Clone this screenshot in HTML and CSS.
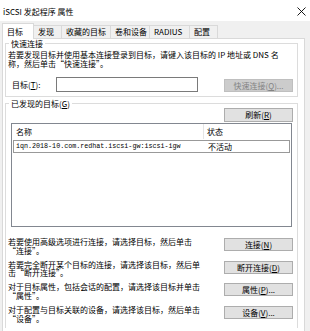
FILE: index.html
```html
<!DOCTYPE html>
<html lang="zh-CN">
<head>
    <meta charset="UTF-8">
    <meta name="viewport" content="width=device-width, initial-scale=1.0">
    <title>iSCSI 发起程序 属性</title>
    <link rel="stylesheet" href="styles.css">
</head>
<body>
    <div class="titlebar">
        <span class="title">iSCSI 发起程序 属性</span>
        <svg class="close" width="9" height="9" viewBox="0 0 9 9">
            <path d="M0.5 0.5 L8.5 8.5 M8.5 0.5 L0.5 8.5" stroke="#000" stroke-width="0.9" fill="none"/>
        </svg>
    </div>

    <div class="tabs">
        <div class="tab tab-active w31">目标</div>
        <div class="tab w28">发现</div>
        <div class="tab w49">收藏的目标</div>
        <div class="tab w39">卷和设备</div>
        <div class="tab w40">RADIUS</div>
        <div class="tab w28">配置</div>
    </div>

    <div class="panel">
        <fieldset class="group group-quick">
            <legend>快速连接</legend>
            <div class="desc">若要发现目标并使用基本连接登录到目标，请键入该目标的 IP 地址或 DNS 名称，然后单击“快速连接”。</div>
            <div class="quick-row">
                <label class="field-label" for="target">目标(<u>T</u>):</label>
                <input type="text" id="target" class="field">
                <button class="btn btn-disabled" disabled>快速连接(<u>Q</u>)...</button>
            </div>
        </fieldset>

        <fieldset class="group group-found">
            <legend>已发现的目标(<u>G</u>)</legend>
            <div class="refresh-row">
                <button class="btn">刷新(<u>R</u>)</button>
            </div>
            <div class="list">
                <div class="list-head">
                    <div class="col-name">名称</div>
                    <div class="col-state">状态</div>
                </div>
                <div class="list-row">
                    <div class="col-name ser">iqn.2018-10.com.redhat.iscsi-gw:iscsi-igw</div>
                    <div class="col-state">不活动</div>
                </div>
            </div>

            <div class="actions">
                <div class="action">
                    <div class="action-text">若要使用高级选项进行连接，请选择目标，然后单击“连接”。</div>
                    <button class="btn">连接(<u>N</u>)</button>
                </div>
                <div class="action">
                    <div class="action-text">若要完全断开某个目标的连接，请选择该目标，然后单击“断开连接”。</div>
                    <button class="btn">断开连接(<u>D</u>)</button>
                </div>
                <div class="action">
                    <div class="action-text">对于目标属性，包括会话的配置，请选择该目标并单击“属性”。</div>
                    <button class="btn">属性(<u>P</u>)...</button>
                </div>
                <div class="action">
                    <div class="action-text">对于配置与目标关联的设备，请选择该目标，然后单击“设备”。</div>
                    <button class="btn">设备(<u>V</u>)...</button>
                </div>
            </div>
        </fieldset>
    </div>
</body>
</html>
```

FILE: styles.css
```css
body {
  margin: 0;
  height: 331px;
  overflow: hidden;
  background: #f0f0f0;
  font-family: "Noto Sans CJK SC", "Noto Sans", sans-serif;
  font-size: 8px;
  line-height: 9px;
  color: #000;
}

u {
  text-decoration: underline;
  text-underline-offset: 1px;
}

.ser {
  font-family: "Liberation Mono", "Noto Sans CJK SC", monospace;
}

/* title bar */
.titlebar {
  display: flex;
  align-items: center;
  justify-content: space-between;
  height: 21px;
  padding: 0 4px 0 3px;
  background: #fff;
}

.title {
  padding-top: 2px;
}

.close {
  display: block;
  margin-top: 2px;
}

/* tabs */
.tabs {
  display: flex;
  align-items: flex-end;
  height: 17px;
  margin: 0 5px 0 2px;
  border-bottom: 1px solid #d9d9d9;
}

.tab {
  box-sizing: border-box;
  height: 13px;
  padding: 1px 0 0 4px;
  border: 1px solid #d9d9d9;
  border-bottom: none;
  border-left: none;
  background: #f0f0f0;
  white-space: nowrap;
}

.tab-active {
  height: 16px;
  margin-bottom: -1px;
  padding: 3px 0 0 4px;
  border-left: 1px solid #d9d9d9;
  background: #fff;
}

.w31 { width: 32px; }
.w28 { width: 28px; }
.w49 { width: 49px; }
.w39 { width: 39px; }
.w40 { width: 40px; }

/* panel */
.panel {
  height: 292px;
  margin: 0 5px 0 2px;
  padding-top: 0;
  background: #fff;
  border: 1px solid #d9d9d9;
  border-top: none;
  border-bottom: none;
}

.group {
  margin: 0 6px 0 2px;
  padding: 2px 4px 4px 2px;
  border: 1px solid #dcdcdc;
  min-inline-size: 0;
}

.group legend {
  padding: 0 2px;
  margin-left: 1px;
  line-height: 9px;
}

.group-found {
  margin-top: 2px;
  padding-top: 0;
  height: 224px;
  border-bottom: none;
}

.desc {
  width: 285px;
}

.quick-row {
  display: flex;
  align-items: flex-end;
  margin-top: 9px;
  height: 15px;
}

.field-label {
  width: 44px;
  padding-left: 4px;
  padding-bottom: 3px;
}

.field {
  box-sizing: border-box;
  width: 142px;
  height: 15px;
  margin: 0;
  padding: 0 2px;
  border: 1px solid #7a7a7a;
  background: #fff;
  font: inherit;
}

.btn {
  box-sizing: border-box;
  width: 69px;
  height: 13px;
  margin: 0 0 0 auto;
  padding: 0;
  border: 1px solid #adadad;
  background: #e1e1e1;
  font-family: inherit;
  font-size: 8px;
  line-height: 11px;
  color: #000;
  white-space: nowrap;
}

.btn-disabled {
  border-color: #bfbfbf;
  background: #cccccc;
  color: #838383;
}

.refresh-row {
  display: flex;
}

.refresh-row .btn {
  height: 14px;
  line-height: 12px;
}

/* list view */
.list {
  box-sizing: border-box;
  height: 104px;
  margin: 1px 1px 0 3px;
  border: 1px solid #828790;
  background: #fff;
}

.list-head {
  display: flex;
  height: 15px;
  align-items: center;
}

.list-head .col-name {
  border-right: 1px solid #e5e5e5;
  height: 15px;
  line-height: 15px;
}

.col-name {
  box-sizing: border-box;
  width: 192px;
  padding-left: 4px;
}

.col-state {
  padding-left: 3px;
}

.list-row {
  display: flex;
  align-items: center;
  height: 11px;
  margin: 1px 1px 0 1px;
  border: 1px solid #999;
}

.list-row .col-name {
  width: 191px;
  padding-left: 2px;
  font-size: 6.7px;
}

/* actions */
.actions {
  margin-top: 11px;
}

.action {
  display: flex;
  align-items: flex-start;
  height: 22.7px;
}

.action-text {
  width: 196px;
  line-height: 8.5px;
}
```
